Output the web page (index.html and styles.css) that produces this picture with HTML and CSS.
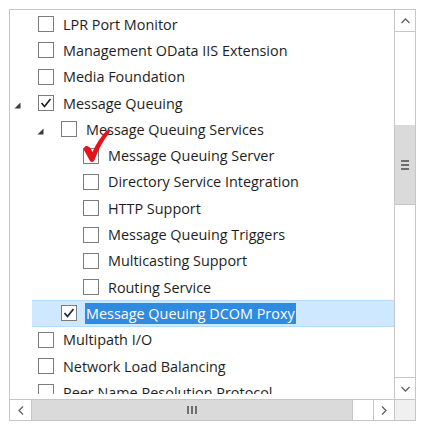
FILE: index.html
```html
<!DOCTYPE html>
<html lang="en">
<head>
    <meta charset="UTF-8">
    <meta name="viewport" content="width=device-width, initial-scale=1.0">
    <title>Features</title>
    <link rel="stylesheet" href="styles.css">
</head>
<body>
    <div class="tree-frame">
        <div class="tree-items">
            <div class="row lvl0"><span class="expander"></span><span class="box"></span><span class="label">LPR Port Monitor</span></div>
            <div class="row lvl0"><span class="expander"></span><span class="box"></span><span class="label">Management OData IIS Extension</span></div>
            <div class="row lvl0"><span class="expander"></span><span class="box"></span><span class="label">Media Foundation</span></div>
            <div class="row lvl0">
                <span class="expander"><svg width="7" height="7" viewBox="0 0 7 7"><polygon points="6.5,0.5 6.5,6.5 0.5,6.5" fill="#3c3c3c"/></svg></span>
                <span class="box"><svg width="14" height="14" viewBox="0 0 14 14"><polyline points="2.5,7 5.5,10.5 11.5,3" fill="none" stroke="#222" stroke-width="1.7"/></svg></span>
                <span class="label">Message Queuing</span>
            </div>
            <div class="row lvl1">
                <span class="expander"><svg width="7" height="7" viewBox="0 0 7 7"><polygon points="6.5,0.5 6.5,6.5 0.5,6.5" fill="#3c3c3c"/></svg></span>
                <span class="box"></span>
                <span class="label">Message Queuing Services</span>
            </div>
            <div class="row lvl2">
                <span class="expander"></span><span class="box"></span><span class="label">Message Queuing Server</span>
                <!-- red tick drawn over the checkbox -->
                <svg class="red-tick" width="28" height="34" viewBox="0 0 28 34">
                    <path d="M1,19 C2.5,16 5.5,16.5 7.5,19.5 L9.5,23 C13,15 18,7.5 23.5,1.5 C25.5,0 27.5,1.5 26.5,3.5 C20.5,11 15.5,20 11.5,31 C10.5,33.5 7.5,33.5 6.5,31 L1.5,22 C0.8,21 0.6,20 1,19 Z" fill="#e3141c"/>
                </svg>
            </div>
            <div class="row lvl2"><span class="expander"></span><span class="box"></span><span class="label">Directory Service Integration</span></div>
            <div class="row lvl2"><span class="expander"></span><span class="box"></span><span class="label">HTTP Support</span></div>
            <div class="row lvl2"><span class="expander"></span><span class="box"></span><span class="label">Message Queuing Triggers</span></div>
            <div class="row lvl2"><span class="expander"></span><span class="box"></span><span class="label">Multicasting Support</span></div>
            <div class="row lvl2"><span class="expander"></span><span class="box"></span><span class="label">Routing Service</span></div>
            <div class="row lvl1 selected">
                <span class="expander"></span>
                <span class="box"><svg width="14" height="14" viewBox="0 0 14 14"><polyline points="2.5,7 5.5,10.5 11.5,3" fill="none" stroke="#222" stroke-width="1.7"/></svg></span>
                <span class="label"><span class="text-sel">Message Queuing DCOM Proxy</span></span>
            </div>
            <div class="row lvl0"><span class="expander"></span><span class="box"></span><span class="label">Multipath I/O</span></div>
            <div class="row lvl0"><span class="expander"></span><span class="box"></span><span class="label">Network Load Balancing</span></div>
            <div class="row lvl0"><span class="expander"></span><span class="box"></span><span class="label">Peer Name Resolution Protocol</span></div>
        </div>

        <div class="vscroll">
            <div class="sb-btn sb-up"><svg width="9" height="6" viewBox="0 0 9 6"><polyline points="0.5,5 4.5,1 8.5,5" fill="none" stroke="#606060" stroke-width="1.3"/></svg></div>
            <div class="sb-track">
                <div class="v-thumb"><span class="grip-h"></span><span class="grip-h"></span><span class="grip-h"></span></div>
            </div>
            <div class="sb-btn sb-down"><svg width="9" height="6" viewBox="0 0 9 6"><polyline points="0.5,1 4.5,5 8.5,1" fill="none" stroke="#606060" stroke-width="1.3"/></svg></div>
        </div>

        <div class="hscroll">
            <div class="sb-btn sb-left"><svg width="6" height="9" viewBox="0 0 6 9"><polyline points="5,0.5 1,4.5 5,8.5" fill="none" stroke="#606060" stroke-width="1.3"/></svg></div>
            <div class="h-thumb"><span class="grip-v"></span><span class="grip-v"></span><span class="grip-v"></span></div>
            <div class="h-rest"></div>
            <div class="sb-btn sb-right"><svg width="6" height="9" viewBox="0 0 6 9"><polyline points="1,0.5 5,4.5 1,8.5" fill="none" stroke="#606060" stroke-width="1.3"/></svg></div>
        </div>

        <div class="corner"></div>
    </div>
</body>
</html>
```

FILE: styles.css
```css
body {
    margin: 9px;
    background: #ffffff;
    font-family: "Open Sans", "Noto Sans", sans-serif;
    font-size: 14.4px;
    color: #1e1e1e;
}
.tree-frame {
    width: 407px;
    height: 412px;
    box-sizing: border-box;
    border: 1px solid #c6c6c6;
    display: grid;
    grid-template-columns: 1fr 21px;
    grid-template-rows: 1fr 21px;
    background: #fff;
}
.tree-items {
    overflow: hidden;
    padding-top: 1px;
    margin-bottom: 5px;
}
.row {
    position: relative;
    display: flex;
    align-items: center;
    height: 26.3px;
    white-space: nowrap;
    box-sizing: border-box;
}
.lvl0 { margin-left: 0; }
.lvl1 { margin-left: 23px; }
.lvl2 { margin-left: 45px; }
.expander {
    width: 28px;
    display: flex;
    justify-content: flex-start;
    padding-left: 4px;
    box-sizing: border-box;
    margin-top: 4px;
}
.expander svg { display: block; }
.box {
    width: 16px;
    height: 16px;
    box-sizing: border-box;
    border: 1px solid #7c7c7c;
    background: #fff;
    display: flex;
    align-items: center;
    justify-content: center;
    margin-right: 9px;
}
.box svg { display: block; }
.label {
    line-height: 21px;
}
.selected {
    background: #cde8ff;
    border-top: 1px solid #b4dcfc;
    border-bottom: 1px solid #b4dcfc;
    margin-left: 22px;
}
.selected .expander { width: 29px; }
.selected .box { margin-right: 8px; }
.text-sel {
    display: inline-block;
    background: #2f8be0;
    color: #fff;
    padding: 0 1px;
}
.red-tick {
    position: absolute;
    left: 28px;
    top: -13px;
}

/* scrollbars */
.vscroll {
    border-left: 1px solid #c6c6c6;
    display: flex;
    flex-direction: column;
}
.sb-btn {
    display: flex;
    align-items: center;
    justify-content: center;
    background: #fff;
    box-sizing: border-box;
}
.sb-btn svg { display: block; }
.sb-up {
    height: 22px;
    border-bottom: 1px solid #c6c6c6;
}
.sb-down {
    height: 22px;
    border-top: 1px solid #c6c6c6;
}
.sb-track {
    flex: 1;
    padding-top: 93px;
}
.v-thumb {
    height: 79px;
    background: #dadada;
    border-bottom: 1px solid #c6c6c6;
    display: flex;
    flex-direction: column;
    align-items: center;
    justify-content: center;
    gap: 2px;
}
.grip-h {
    width: 8px;
    height: 2px;
    background: #6e6e6e;
}
.hscroll {
    border-top: 1px solid #c6c6c6;
    display: flex;
}
.sb-left {
    width: 22px;
    border-right: 1px solid #c6c6c6;
}
.sb-right {
    width: 21px;
    border-left: 1px solid #c6c6c6;
}
.h-thumb {
    width: 320px;
    background: #dadada;
    border-right: 1px solid #c6c6c6;
    display: flex;
    align-items: center;
    justify-content: center;
    gap: 2px;
}
.grip-v {
    width: 2px;
    height: 8px;
    background: #6e6e6e;
}
.h-rest {
    flex: 1;
}
.corner {
    background: #f0f0f0;
    border-left: 1px solid #c6c6c6;
    border-top: 1px solid #c6c6c6;
}
```
